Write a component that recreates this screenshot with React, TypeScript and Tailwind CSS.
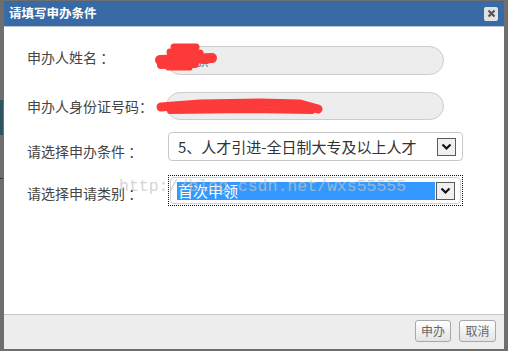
import React from "react";

const cjk = { fontFamily: '"Noto Sans CJK SC", "Noto Sans", sans-serif' };

function Chevron() {
  return (
    <div className="w-[19px] h-[18px] border border-[#5a5a5a] bg-[#f0f0f0] flex items-center justify-center shrink-0">
      <svg width="11" height="8" viewBox="0 0 11 8">
        <path d="M1.5 1.5 L5.5 5.5 L9.5 1.5" fill="none" stroke="#111" strokeWidth="2.2" />
      </svg>
    </div>
  );
}

export default function App() {
  return (
    <div className="relative w-[508px] h-[351px] bg-[#6e6e6e] pt-[1px] pb-[2px] px-[4px] flex flex-col overflow-hidden" style={cjk}>
      {/* left strip background artefacts */}
      <div className="absolute left-0 top-[100px] w-[3px] h-[35px] bg-[#2f5560]" />
      <div className="absolute left-0 top-[178px] w-[3px] h-[1px] bg-[#333]" />
      {/* title bar */}
      <div className="h-[25px] bg-[#386ba5] flex items-center justify-between pl-[5px] pr-[6px] shrink-0">
        <span className="text-white text-[12.5px] font-bold leading-none">请填写申办条件</span>
        <div className="w-[14px] h-[14px] bg-[#e2e2e2] rounded-[2px] flex items-center justify-center">
          <svg width="9" height="9" viewBox="0 0 9 9">
            <path d="M1.5 1.5 L7.5 7.5 M7.5 1.5 L1.5 7.5" stroke="#555" strokeWidth="2.2" />
          </svg>
        </div>
      </div>
      <div className="h-[1px] bg-[#b9c6d4] shrink-0" />
      {/* content */}
      <div className="flex-1 bg-white pl-[23px] pt-[19px] flex flex-col text-[14px] text-[#444]">
        <div className="flex items-start h-[29px]">
          <div className="w-[139px] pt-[1px] leading-[20px]">申办人姓名 ：</div>
          <div className="w-[278px] h-[29px] rounded-full bg-[#ededed] border border-[#cdcdcd]" />
        </div>
        <div className="flex items-start h-[29px] mt-[17px]">
          <div className="w-[139px] pt-[4px] leading-[20px] whitespace-nowrap">申办人身份证号码：</div>
          <div className="w-[278px] h-[28px] rounded-full bg-[#ededed] border border-[#cdcdcd]" />
        </div>
        <div className="flex items-start h-[29px] mt-[11px]">
          <div className="w-[141px] pt-[9px] leading-[20px]">请选择申办条件 ：</div>
          <div className="w-[295px] h-[29px] rounded-[4px] border border-[#c8c8c8] bg-white flex items-center pl-[9px] pr-[6px] justify-between">
            <span className="text-[15px] text-[#333] leading-none whitespace-nowrap">5、人才引进-全日制大专及以上人才</span>
            <Chevron />
          </div>
        </div>
        <div className="flex items-start h-[31px] mt-[14px]">
          <div className="w-[141px] pt-[8px] leading-[20px]">请选择申请类别 ：</div>
          <div className="w-[295px] h-[31px] border border-dotted border-[#111] p-[1px]">
            <div className="h-full rounded-[4px] border border-[#d0d0d0] flex items-center pl-[6px] pr-[5px]">
              <div className="w-[260px] h-[18px] bg-[#3399ff] text-white text-[15px] leading-[18px] pl-[1px]">首次申领</div>
              <div className="ml-[1px]"><Chevron /></div>
            </div>
          </div>
        </div>
      </div>
      {/* footer */}
      <div className="h-[1px] bg-[#c6c6c6] shrink-0" />
      <div className="h-[34px] bg-[#ededed] flex items-center justify-end gap-[8px] pr-[8px] pb-[2px] shrink-0">
        <button className="w-[36px] h-[22px] rounded-[3px] border border-[#a8a8a8] bg-gradient-to-b from-white to-[#e4e4e4] text-[12px] text-[#666] leading-none">申办</button>
        <button className="w-[37px] h-[22px] rounded-[3px] border border-[#a8a8a8] bg-gradient-to-b from-white to-[#e4e4e4] text-[12px] text-[#666] leading-none">取消</button>
      </div>
      {/* watermark */}
      <div
        className="absolute left-[119px] top-[177px] text-[16.5px] leading-[20px] text-[#c4c4c4] opacity-70 whitespace-nowrap pointer-events-none"
        style={{ fontFamily: '"Liberation Mono", monospace' }}
      >
        http://blog.csdn.net/wxs55555
      </div>
      {/* redaction scribbles */}
      <svg className="absolute left-0 top-0 pointer-events-none" width="508" height="351" viewBox="0 0 508 351">
        <text x="196" y="65" fontSize="13" fill="#666" style={cjk}>旗</text>
        <text x="303" y="113" fontSize="13" fill="#666" style={{ fontFamily: '"Liberation Sans", sans-serif' }}>8</text>
        <g fill="none" stroke="#fd3a3a" strokeLinecap="round" strokeLinejoin="round">
          <path d="M174 47 L196 47" strokeWidth="7" />
          <path d="M170 52 L200 53" strokeWidth="7" />
          <path d="M160 60 L212 58" strokeWidth="10" />
          <path d="M161 65 L195 64" strokeWidth="8" />
          <path d="M168 68 L190 68" strokeWidth="5" />
          <path d="M161 107 L200 104 L260 103 L300 104 L318 109" strokeWidth="9" />
          <path d="M170 111 L250 110 L312 111" strokeWidth="6" />
        </g>
      </svg>
    </div>
  );
}
